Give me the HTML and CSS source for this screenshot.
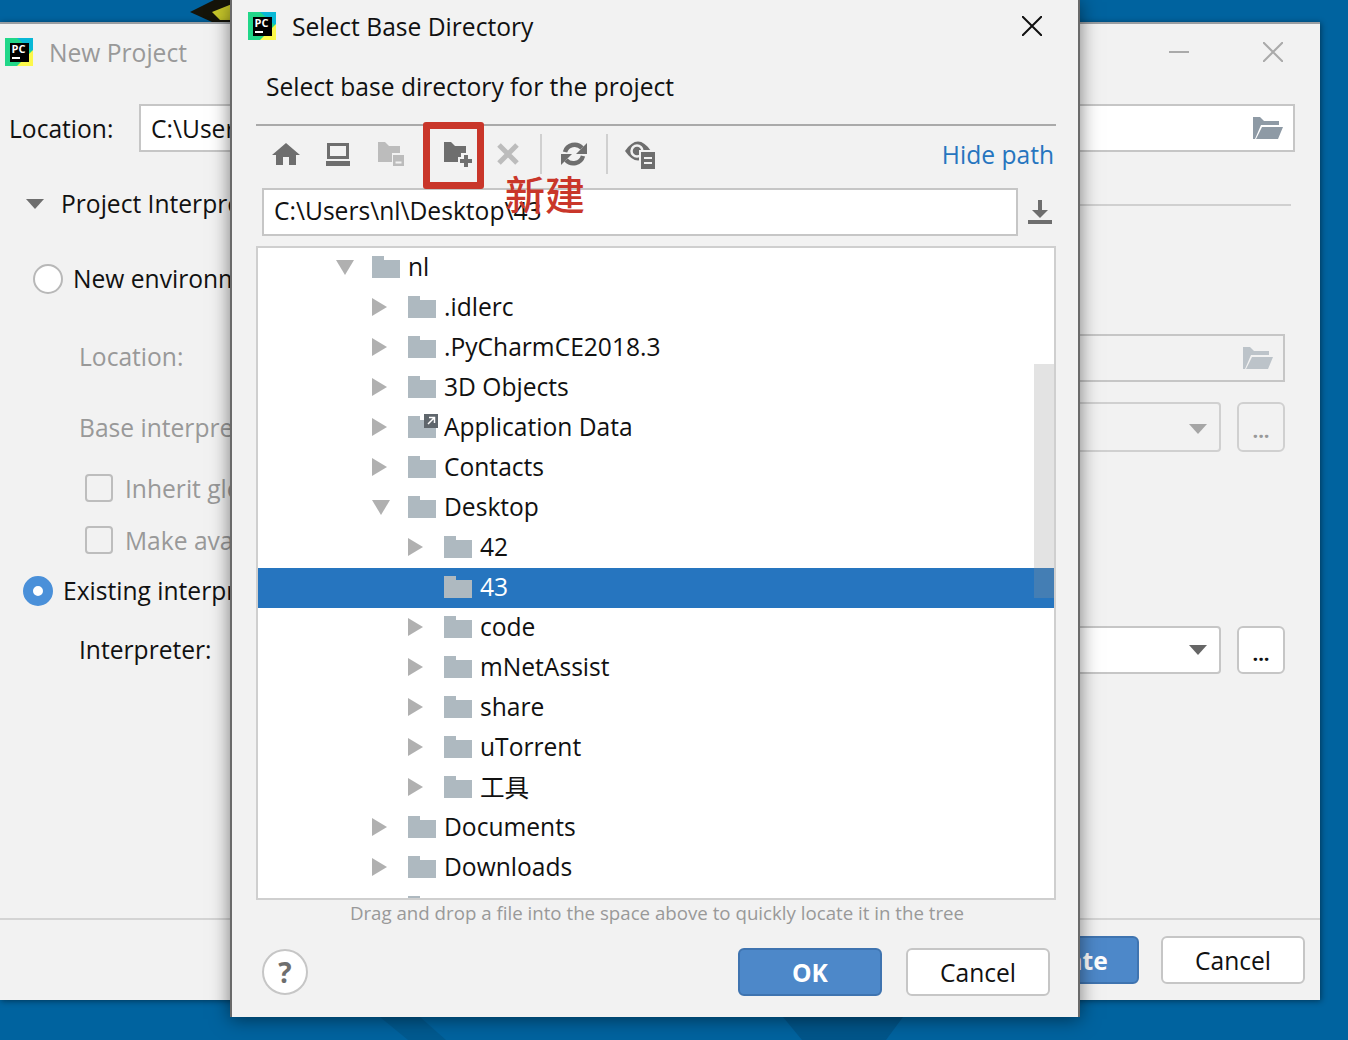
FILE: index.html
```html
<!DOCTYPE html>
<html lang="en">
<head>
  <meta charset="UTF-8">
  <title>Select Base Directory</title>
  <link rel="stylesheet" href="styles.css">
</head>
<body>
<div class="desktop">
  <svg class="wallpaper" width="1348" height="1040" viewBox="0 0 1348 1040">
    <polygon points="190,12 214,0 232,0 232,22 212,22" fill="#15140a"/>
    <polygon points="212,12 232,4 232,20 220,20" fill="#c8c82a"/>
    <polygon points="380,1017 420,1017 446,1040 408,1040" fill="#005a90"/>
    <polygon points="783,1017 903,1017 886,1040 802,1040" fill="#00558a"/>
  </svg>

  <!-- window behind -->
  <div class="window back-window">
    <div class="title-bar">
      <svg class="pc-logo" width="28" height="28" viewBox="0 0 28 28"><polygon points="0,0 28,0 28,28 0,28" fill="#21d789"/><polygon points="12,0 28,0 28,14" fill="#09b8d6"/><polygon points="28,12 28,28 12,28" fill="#fcf84a"/><rect x="5" y="5" width="19" height="19" fill="#000"/><rect x="7" y="19" width="8" height="2" fill="#fff"/><text x="6.500" y="15" class="pc-text">PC</text></svg>
      <span class="title-muted">New Project</span>
      <span class="win-buttons">
        <svg width="20" height="20" viewBox="0 0 20 20"><path d="M0 10H20" stroke="#aaa" stroke-width="2"/></svg>
        <svg width="20" height="20" viewBox="0 0 20 20"><path d="M0 0L20 20M20 0L0 20" stroke="#aaa" stroke-width="2"/></svg>
      </span>
    </div>

    <div class="row location-row">
      <label class="loc-label">Location:</label>
      <div class="field">
        <span>C:\Users\nl\PycharmProjects\untitled</span>
        <svg class="open-folder" width="30" height="22" viewBox="0 0 30 22"><path d="M0 0H7L11 4H26V8H8L2 22H0Z M9 10H30L25 22H3Z" fill="#8e9aa5"/></svg>
      </div>
    </div>

    <div class="row interp-head">
      <span class="collapse-arrow"></span>
      <span class="head-text">Project Interpreter: New Virtualenv environment</span>
      <span class="head-line"></span>
    </div>

    <div class="row radio-row new-env">
      <span class="radio"></span>
      <span class="radio-label">New environment using</span>
    </div>

    <div class="row indent-row first-indent disabled">
      <label class="indent-label">Location:</label>
      <div class="field field-disabled">
        <svg class="open-folder" width="30" height="22" viewBox="0 0 30 22"><path d="M0 0H7L11 4H26V8H8L2 22H0Z M9 10H30L25 22H3Z" fill="#bcc3c9"/></svg>
      </div>
    </div>

    <div class="row indent-row base-row disabled">
      <label class="indent-label">Base interpreter:</label>
      <div class="select select-disabled"><span class="select-arrow arrow-light"></span></div>
      <div class="dots-btn dots-disabled">...</div>
    </div>

    <div class="row check-row inherit-row disabled"><span class="checkbox"></span><span>Inherit global site-packages</span></div>
    <div class="row check-row make-row disabled"><span class="checkbox"></span><span>Make available to all projects</span></div>

    <div class="row radio-row existing">
      <span class="radio radio-on"></span>
      <span class="radio-label">Existing interpreter</span>
    </div>

    <div class="row indent-row interp-row">
      <label class="indent-label">Interpreter:</label>
      <div class="select"><span class="select-arrow"></span></div>
      <div class="dots-btn">...</div>
    </div>

    <div class="back-footer">
      <button class="btn btn-primary create-btn">Create</button>
      <button class="btn">Cancel</button>
    </div>
  </div>

  <!-- the dialog -->
  <div class="window dialog">
    <div class="dialog-title">
      <svg class="pc-logo" width="28" height="28" viewBox="0 0 28 28"><polygon points="0,0 28,0 28,28 0,28" fill="#21d789"/><polygon points="12,0 28,0 28,14" fill="#09b8d6"/><polygon points="28,12 28,28 12,28" fill="#fcf84a"/><rect x="5" y="5" width="19" height="19" fill="#000"/><rect x="7" y="19" width="8" height="2" fill="#fff"/><text x="6.500" y="15" class="pc-text">PC</text></svg>
      <span>Select Base Directory</span>
      <svg class="dialog-close" width="20" height="20" viewBox="0 0 20 20"><path d="M0 0L20 20M20 0L0 20" stroke="#111" stroke-width="2"/></svg>
    </div>
    <div class="subtitle">Select base directory for the project</div>

    <div class="toolbar">
      <svg class="tool" width="32" height="26" viewBox="0 0 32 26"><path d="M16 2L30 14H26V24H19V16H13V24H6V14H2Z" fill="#6e6e6e"/></svg>
      <svg class="tool" width="32" height="26" viewBox="0 0 32 26"><path d="M5 2H27V18H5Z M8 5V15H24V5Z M4 20H28V25H4Z" fill="#6e6e6e" fill-rule="evenodd"/></svg>
      <svg class="tool" width="32" height="26" viewBox="0 0 32 26"><path d="M4 1H11L15 5H26V12H18V21H4Z" fill="#bcbcbc"/><path d="M19 14H30V25H19Z" fill="#bcbcbc"/><path d="M21.500 20.500H27.500V22.500H21.500Z" fill="#f2f2f2"/></svg>
      <svg class="tool" width="32" height="26" viewBox="0 0 32 26"><path d="M4 1H11L15 5H26V12H21V16H18V21H4Z" fill="#6e6e6e"/><path d="M24 14H28V18H32V22H28V26H24V22H20V18H24Z" fill="#6e6e6e"/></svg>
      <svg class="tool" width="32" height="26" viewBox="0 0 32 26"><path d="M7 4L25 22M25 4L7 22" stroke="#bcbcbc" stroke-width="5"/></svg>
      <span class="tool-sep"></span>
      <svg class="tool" width="32" height="26" viewBox="0 0 32 26"><path d="M7 11A10 10 0 0 1 24 7" fill="none" stroke="#6e6e6e" stroke-width="4.500"/><path d="M29 2V13H18Z" fill="#6e6e6e"/><path d="M25 15A10 10 0 0 1 8 19" fill="none" stroke="#6e6e6e" stroke-width="4.500"/><path d="M3 24V13H14Z" fill="#6e6e6e"/></svg>
      <span class="tool-sep"></span>
      <svg class="tool" width="32" height="30" viewBox="0 0 32 30"><path d="M1 12Q14 -7 27 12Q14 31 1 12Z" fill="#6e6e6e"/><circle cx="13" cy="12" r="5.500" fill="none" stroke="#f2f2f2" stroke-width="2.500"/><path d="M15 11H32V30H15Z" fill="#f2f2f2"/><path d="M17 13H31V30H17Z" fill="#6e6e6e"/><path d="M20 18H28V20H20Z M20 23H28V25H20Z" fill="#f2f2f2"/></svg>
      <a class="hide-path">Hide path</a>
    </div>

    <div class="path-row">
      <div class="path-input">C:\Users\nl\Desktop\43</div>
      <svg class="download" width="24" height="24" viewBox="0 0 24 24"><path d="M10 0H14V10H20L12 18L4 10H10Z M0 20H24V24H0Z" fill="#6e6e6e"/></svg>
    </div>

    <div class="tree">
      <div class="tree-row depth-0"><span class="twist open"></span><span class="folder"></span>nl</div>
      <div class="tree-row depth-1"><span class="twist"></span><span class="folder"></span>.idlerc</div>
      <div class="tree-row depth-1"><span class="twist"></span><span class="folder"></span>.PyCharmCE2018.3</div>
      <div class="tree-row depth-1"><span class="twist"></span><span class="folder"></span>3D Objects</div>
      <div class="tree-row depth-1"><span class="twist"></span><span class="folder"><svg class="link-badge" width="14" height="14" viewBox="0 0 14 14"><rect width="14" height="14" fill="#5f666c"/><path d="M4 10L10 4M5 3.500H10.500V9" fill="none" stroke="#fff" stroke-width="1.500"/></svg></span>Application Data</div>
      <div class="tree-row depth-1"><span class="twist"></span><span class="folder"></span>Contacts</div>
      <div class="tree-row depth-1"><span class="twist open"></span><span class="folder"></span>Desktop</div>
      <div class="tree-row depth-2"><span class="twist"></span><span class="folder"></span>42</div>
      <div class="tree-row depth-2 selected"><span class="twist none"></span><span class="folder"></span>43</div>
      <div class="tree-row depth-2"><span class="twist"></span><span class="folder"></span>code</div>
      <div class="tree-row depth-2"><span class="twist"></span><span class="folder"></span>mNetAssist</div>
      <div class="tree-row depth-2"><span class="twist"></span><span class="folder"></span>share</div>
      <div class="tree-row depth-2"><span class="twist"></span><span class="folder"></span>uTorrent</div>
      <div class="tree-row depth-2"><span class="twist"></span><span class="folder"></span>工具</div>
      <div class="tree-row depth-1"><span class="twist"></span><span class="folder"></span>Documents</div>
      <div class="tree-row depth-1"><span class="twist"></span><span class="folder"></span>Downloads</div>
      <div class="tree-row depth-1"><span class="twist"></span><span class="folder"></span>Favorites</div>
      <div class="scroll-thumb"></div>
    </div>

    <div class="hint">Drag and drop a file into the space above to quickly locate it in the tree</div>

    <div class="dialog-footer">
      <div class="help-btn">?</div>
      <button class="btn btn-primary ok-btn">OK</button>
      <button class="btn">Cancel</button>
    </div>

    <div class="callout-box"></div>
    <div class="callout-text">新建</div>
  </div>
</div>
</body>
</html>
```

FILE: styles.css
```css
* {
  box-sizing: border-box;
}
body {
  margin: 0;
  overflow: hidden;
  font-family: "Open Sans", "Noto Sans CJK SC", sans-serif;
  font-size: 24.6px;
  color: #111;
}
.desktop {
  position: relative;
  width: 1348px;
  height: 1040px;
  overflow: hidden;
  background: #00639f;
}
.wallpaper {
  position: absolute;
  left: 0;
  top: 0;
}
.window {
  position: absolute;
  display: flex;
  flex-direction: column;
  background: #f2f2f2;
}
.pc-text {
  font-family: "Open Sans", sans-serif;
  font-size: 11px;
  font-weight: 700;
  fill: #fff;
}

/* back window */
.back-window {
  left: 0;
  top: 22px;
  width: 1320px;
  height: 978px;
  border-top: 2px solid #9a9ea2;
  box-shadow: 1px 1px 6px rgba(0, 0, 0, 0.45);
}
.title-bar {
  height: 56px;
  flex: none;
  display: flex;
  align-items: center;
  padding: 0 37px 0 5px;
}
.title-muted {
  margin-left: 16px;
  color: #999;
}
.win-buttons {
  margin-left: auto;
  display: flex;
  gap: 74px;
}
.row {
  display: flex;
  align-items: center;
  flex: none;
}
.location-row {
  height: 48px;
  margin-top: 24px;
  padding: 0 25px 0 9px;
}
.loc-label {
  width: 130px;
}
.field {
  flex: 1;
  height: 48px;
  display: flex;
  align-items: center;
  padding: 0 10px;
  background: #fff;
  border: 2px solid #c6c6c6;
}
.open-folder {
  margin-left: auto;
}
.field-disabled {
  background: #f2f2f2;
}
.interp-head {
  height: 30px;
  margin-top: 37px;
  padding: 0 29px 0 26px;
}
.collapse-arrow {
  width: 0;
  height: 0;
  border-left: 9px solid transparent;
  border-right: 9px solid transparent;
  border-top: 10px solid #6e6e6e;
}
.head-text {
  margin: 0 0 2px 17px;
  white-space: nowrap;
}
.head-line {
  flex: 1;
  height: 2px;
  margin: 2px 0 0 12px;
  background: #d0d0d0;
}
.radio-row {
  height: 30px;
}
.radio-label {
  margin-bottom: 2px;
}
.radio {
  width: 30px;
  height: 30px;
  flex: none;
  border-radius: 50%;
  background: #fff;
  border: 2px solid #b8b8b8;
}
.radio-on {
  background: #fff;
  border: 10px solid #4a90d9;
}
.new-env {
  margin-top: 45px;
  padding-left: 33px;
  gap: 10px;
}
.existing {
  margin-top: 22px;
  padding-left: 23px;
  gap: 10px;
}
.indent-row {
  padding: 0 35px 0 79px;
}
.indent-label {
  width: 201px;
  flex: none;
}
.disabled {
  color: #999;
}
.first-indent {
  height: 48px;
  margin-top: 40px;
}
.first-indent .indent-label {
  margin-bottom: 3px;
}
.base-row {
  height: 50px;
  margin-top: 20px;
}
.base-row .select {
  padding-top: 4px;
}
.interp-row {
  height: 48px;
  margin-top: 20px;
}
.interp-row .indent-label {
  margin-bottom: 2px;
}
.select {
  flex: 1;
  height: 100%;
  display: flex;
  align-items: center;
  justify-content: flex-end;
  padding-right: 12px;
  background: #fff;
  border: 2px solid #c6c6c6;
  border-radius: 4px;
}
.select-disabled {
  background: #f2f2f2;
  border-color: #d0d0d0;
}
.select-arrow {
  width: 0;
  height: 0;
  border-left: 9px solid transparent;
  border-right: 9px solid transparent;
  border-top: 10px solid #666;
}
.arrow-light {
  border-top-color: #a6a6a6;
}
.dots-btn {
  width: 48px;
  height: 100%;
  margin-left: 16px;
  display: flex;
  align-items: center;
  justify-content: center;
  background: #fff;
  border: 2px solid #c6c6c6;
  border-radius: 6px;
  font-size: 20px;
  font-weight: 700;
  padding-top: 6px;
}
.dots-disabled {
  background: #f2f2f2;
  border-color: #d0d0d0;
  color: #999;
}
.check-row {
  height: 28px;
  padding-left: 85px;
  gap: 12px;
}
.inherit-row {
  margin-top: 22px;
}
.make-row {
  margin-top: 24px;
}
.checkbox {
  width: 28px;
  height: 28px;
  flex: none;
  border: 2px solid #bdbdbd;
  border-radius: 4px;
}
.back-footer {
  margin-top: auto;
  height: 82px;
  flex: none;
  display: flex;
  justify-content: flex-end;
  gap: 22px;
  padding: 16px 15px 0 0;
  border-top: 2px solid #d4d4d4;
}
.btn {
  width: 144px;
  height: 48px;
  font: inherit;
  color: #111;
  background: #fff;
  border: 2px solid #c6c6c6;
  border-radius: 6px;
  padding: 0;
}
.btn-primary {
  color: #fff;
  font-weight: 700;
  background: #4d88c9;
  border-color: #3f74b0;
}

/* dialog */
.dialog {
  left: 230px;
  top: 0;
  width: 850px;
  height: 1017px;
  border-left: 2px solid #6a6a6a;
  border-right: 2px solid #6a6a6a;
  box-shadow: 0 2px 18px rgba(0, 0, 0, 0.5);
}
.dialog-title {
  height: 52px;
  flex: none;
  display: flex;
  align-items: center;
  gap: 16px;
  padding: 0 36px 0 16px;
}
.dialog-close {
  margin-left: auto;
}
.subtitle {
  height: 36px;
  margin-top: 17px;
  padding-left: 34px;
  line-height: 36px;
}
.toolbar {
  height: 58px;
  margin: 19px 22px 0 24px;
  flex: none;
  display: flex;
  align-items: center;
  padding: 0 2px 0 14px;
  border-top: 2px solid #aaa;
}
.tool {
  flex: none;
  margin-right: 20px;
}
.tool:nth-child(3) {
  margin-right: 34px;
}
.tool:nth-child(5),
.tool:nth-child(7) {
  margin-right: 16px;
}
.tool:last-of-type {
  margin-right: 0;
}
.tool-sep {
  width: 2px;
  height: 40px;
  flex: none;
  margin-right: 16px;
  background: #d0d0d0;
}
.hide-path {
  margin-left: auto;
  color: #2675bf;
}
.path-row {
  flex: none;
  display: flex;
  align-items: center;
  margin-top: 6px;
  padding-left: 30px;
}
.path-input {
  width: 756px;
  height: 48px;
  padding-left: 10px;
  line-height: 41px;
  background: #fff;
  border: 2px solid #c6c6c6;
}
.download {
  margin-left: 10px;
}
.tree {
  position: relative;
  height: 654px;
  margin: 10px 22px 0 24px;
  flex: none;
  overflow: hidden;
  background: #fff;
  border: 2px solid #cfcfcf;
}
.tree-row {
  display: flex;
  align-items: center;
  height: 40px;
  padding-bottom: 4px;
  white-space: nowrap;
}
.depth-0 {
  padding-left: 78px;
}
.depth-1 {
  padding-left: 114px;
}
.depth-2 {
  padding-left: 150px;
}
.selected {
  color: #fff;
  background: #2675bf;
}
.twist {
  width: 36px;
  height: 18px;
  flex: none;
  position: relative;
  margin-top: 2px;
}
.twist::before {
  content: "";
  position: absolute;
  left: 0;
  top: 0;
  border-top: 9px solid transparent;
  border-bottom: 9px solid transparent;
  border-left: 15px solid #b0b0b0;
}
.twist.open::before {
  top: 2px;
  border-left: 9px solid transparent;
  border-right: 9px solid transparent;
  border-top: 15px solid #b0b0b0;
  border-bottom: 0;
}
.twist.none::before {
  display: none;
}
.folder {
  position: relative;
  width: 28px;
  height: 22px;
  flex: none;
  margin: 2px 8px 0 0;
  background: #aeb9c0;
}
.folder::before {
  content: "";
  position: absolute;
  right: 0;
  top: 0;
  width: 16px;
  height: 4px;
  background: #fff;
}
.selected .folder::before {
  background: #2675bf;
}
.link-badge {
  position: absolute;
  left: 16px;
  top: -2px;
  z-index: 1;
}
.scroll-thumb {
  position: absolute;
  left: 776px;
  top: 116px;
  width: 20px;
  height: 234px;
  background: rgba(150, 150, 150, 0.27);
}
.hint {
  height: 26px;
  flex: none;
  padding-left: 4px;
  text-align: center;
  color: #999;
  font-size: 18.7px;
  line-height: 26px;
}
.dialog-footer {
  flex: none;
  display: flex;
  align-items: center;
  gap: 24px;
  margin-top: 22px;
  padding: 0 28px 0 30px;
}
.help-btn {
  width: 46px;
  height: 46px;
  margin-right: auto;
  display: flex;
  align-items: center;
  justify-content: center;
  background: #fff;
  border: 2px solid #c6c6c6;
  border-radius: 50%;
  color: #6e6e6e;
  font-weight: 700;
  font-size: 28px;
}

/* red annotation on top of the screenshot */
.callout-box {
  position: absolute;
  left: 191px;
  top: 122px;
  width: 61px;
  height: 67px;
  border: 7px solid #c9362a;
  border-radius: 3px;
}
.callout-text {
  position: absolute;
  left: 273px;
  top: 166px;
  color: #c9362a;
  font-family: "Noto Sans CJK SC", sans-serif;
  font-size: 40px;
  font-weight: 500;
  line-height: 54px;
}
```
